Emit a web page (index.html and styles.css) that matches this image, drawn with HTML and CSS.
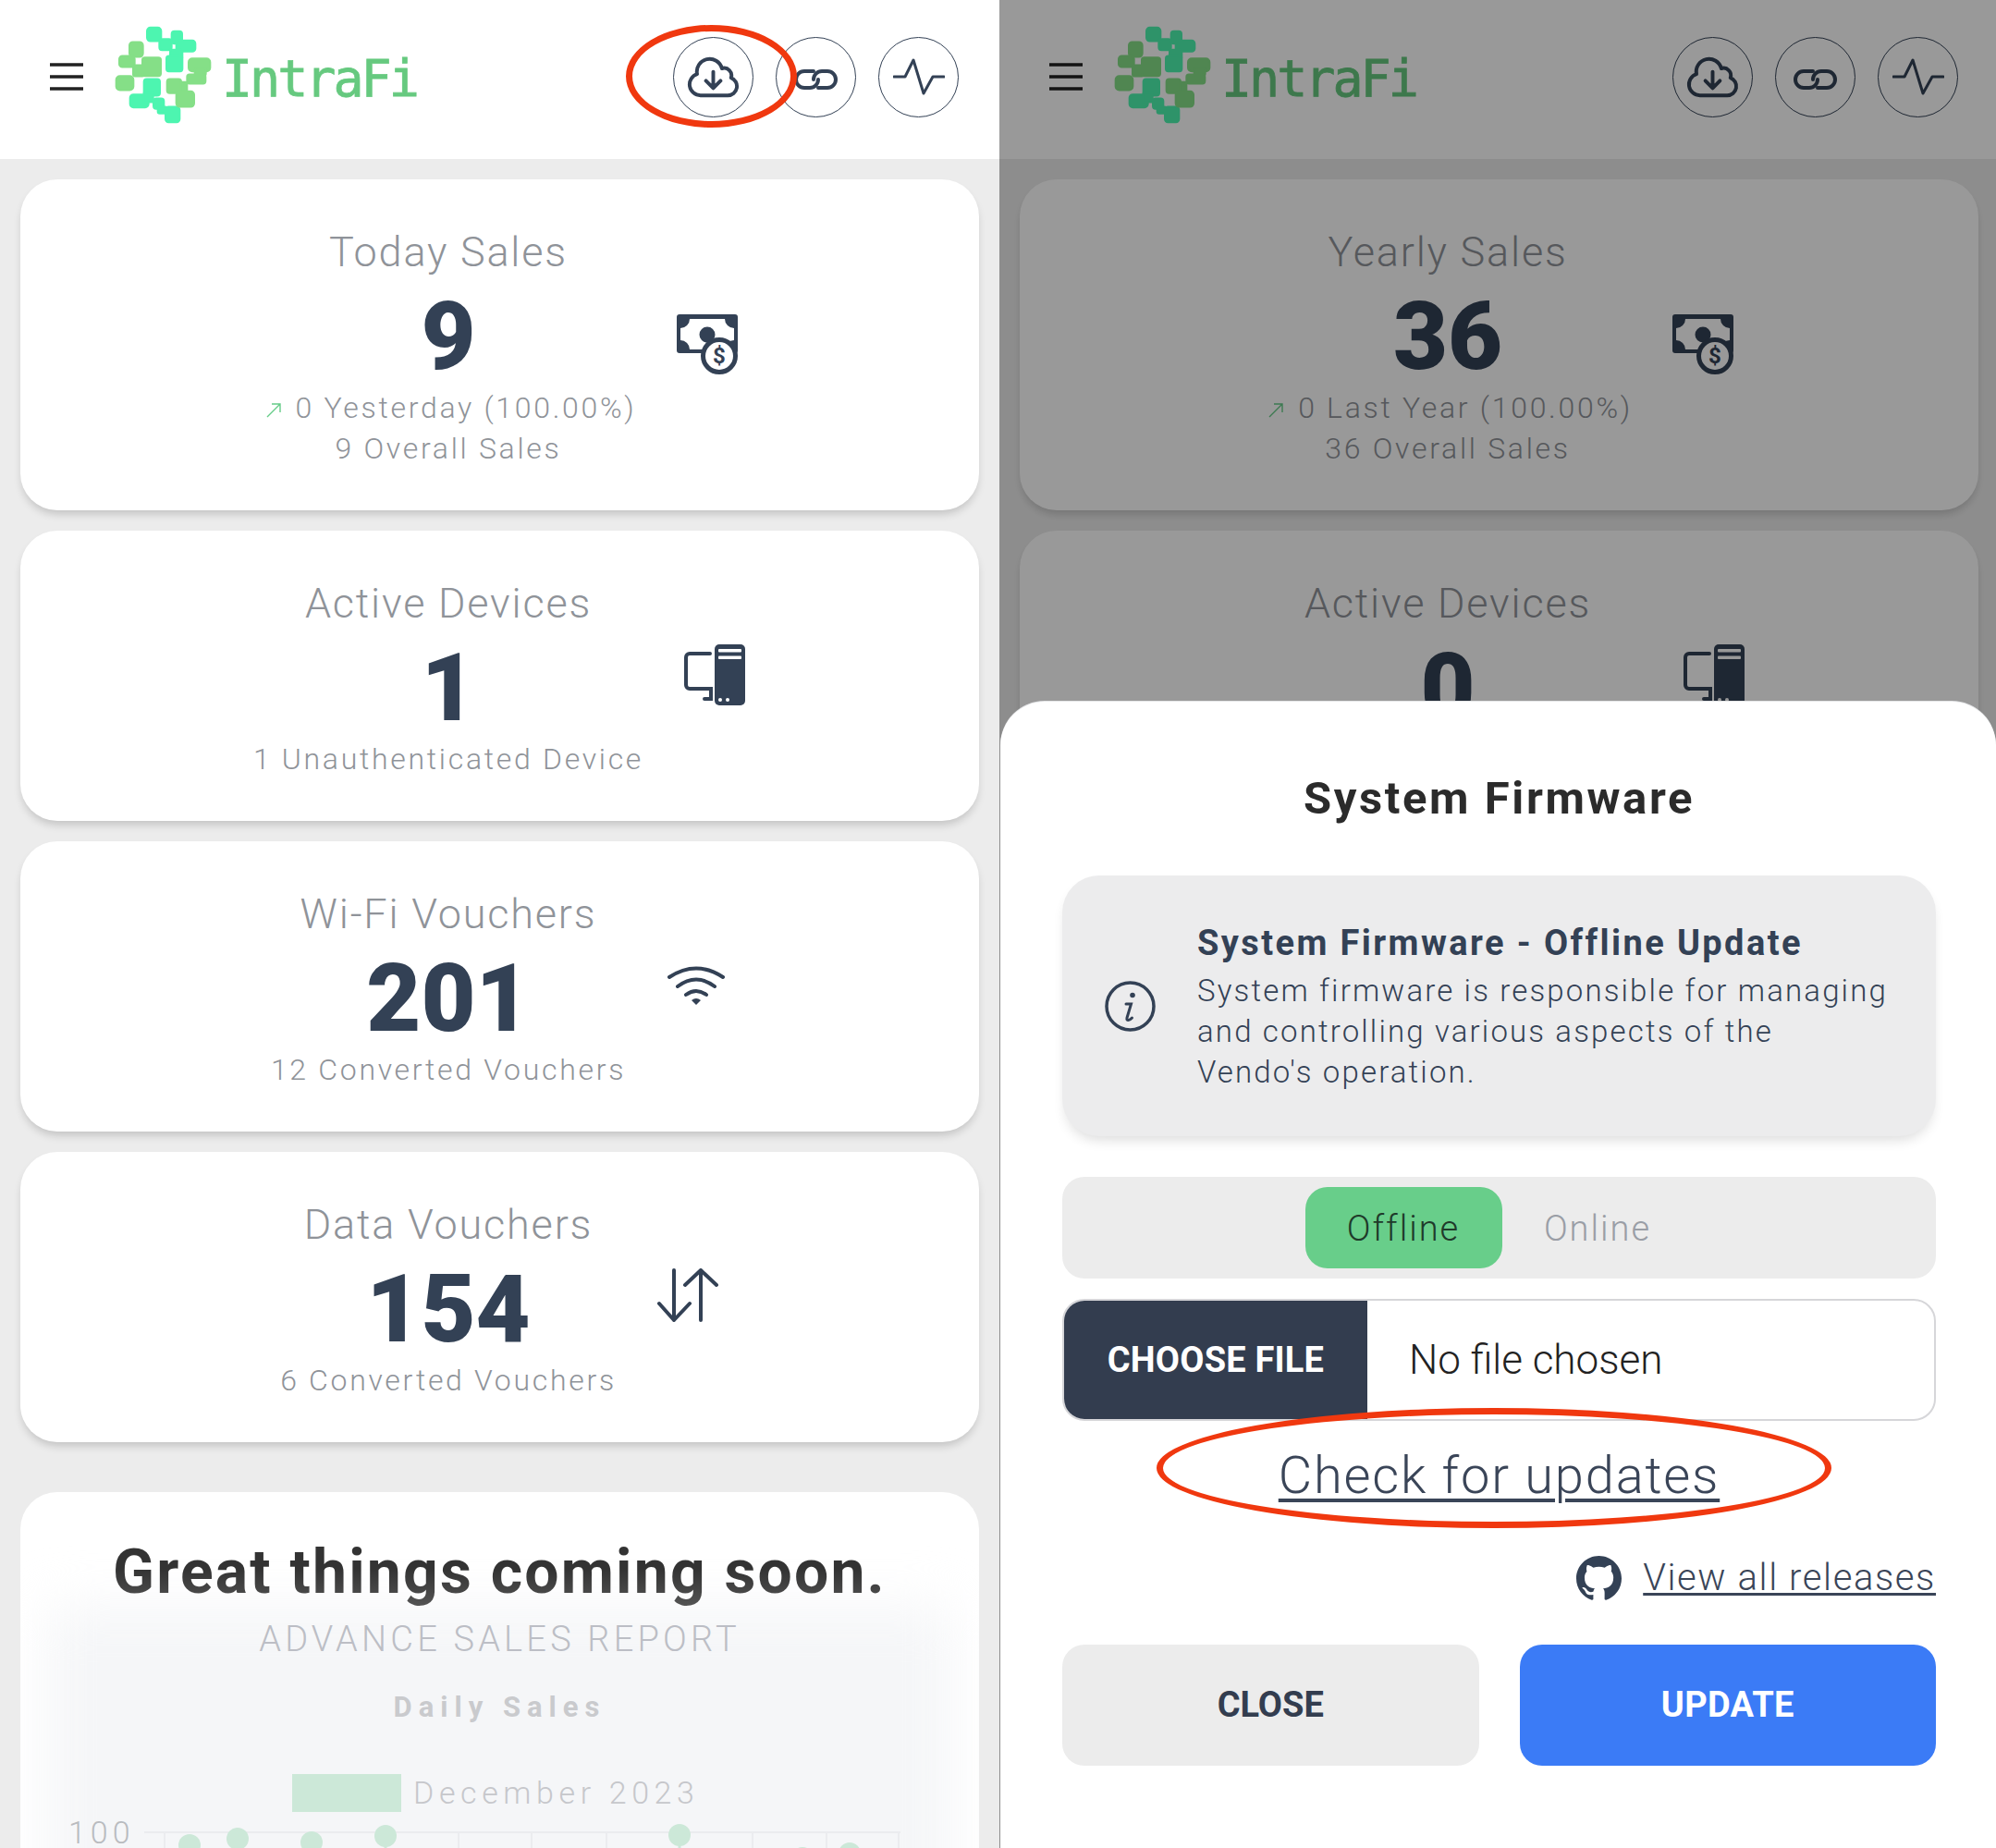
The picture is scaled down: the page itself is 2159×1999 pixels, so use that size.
FILE: index.html
```html
<!DOCTYPE html>
<html>
	<head>
		<meta charset="UTF-8">
		<title>IntraFi</title>
		<link rel="stylesheet" href="styles.css">
	</head>
	<body>
		<svg class="sprites" width="0" height="0">
			<symbol id="logo-mark" viewBox="70 50 315 320">
				<g fill="#4df5b0" stroke="#4df5b0" stroke-width="6" stroke-linejoin="round">
					<rect x="175" y="58" width="46" height="44" rx="11"/>
					<rect x="215" y="95" width="40" height="36" rx="9"/>
					<rect x="255" y="70" width="34" height="40" rx="9"/>
					<rect x="270" y="100" width="62" height="36" rx="10"/>
					<rect x="250" y="130" width="40" height="30" rx="6"/>
					<rect x="238" y="150" width="52" height="50" rx="8"/>
					<rect x="165" y="225" width="52" height="54" rx="9"/>
					<rect x="120" y="275" width="60" height="42" rx="11"/>
					<rect x="165" y="270" width="30" height="30"/>
					<rect x="196" y="288" width="34" height="34" rx="9"/>
					<rect x="210" y="315" width="30" height="22" rx="6"/>
					<rect x="235" y="315" width="46" height="50" rx="10"/>
				</g>
				<g fill="#85df87" stroke="#85df87" stroke-width="6" stroke-linejoin="round">
					<rect x="118" y="105" width="44" height="48" rx="11"/>
					<rect x="85" y="150" width="50" height="36" rx="10"/>
					<rect x="130" y="180" width="36" height="36" rx="6"/>
					<rect x="160" y="155" width="60" height="60" rx="8"/>
					<rect x="310" y="158" width="70" height="42" rx="12"/>
					<rect x="330" y="190" width="36" height="24" rx="6"/>
					<rect x="305" y="210" width="60" height="30" rx="8"/>
					<rect x="75" y="215" width="56" height="46" rx="12"/>
					<rect x="240" y="225" width="46" height="46" rx="9"/>
					<rect x="285" y="235" width="20" height="40" rx="5"/>
					<rect x="270" y="265" width="58" height="50" rx="11"/>
				</g>
			</symbol>
			<symbol id="icon-cloud" viewBox="0 0 24 24">
				<path fill="none" stroke="currentColor" stroke-width="1.5" stroke-linecap="round" stroke-linejoin="round" d="M12 9.75v6.75m0 0-3-3m3 3 3-3m-8.25 6a4.5 4.5 0 0 1-1.41-8.775 5.25 5.25 0 0 1 10.233-2.33 3 3 0 0 1 3.758 3.848A3.752 3.752 0 0 1 18 19.5H6.75Z"/>
			</symbol>
			<symbol id="icon-link" viewBox="0 0 47 22">
				<path fill="none" stroke="currentColor" stroke-width="4" stroke-linecap="round" d="M21 2H11a9 9 0 0 0 0 18h6a9 9 0 0 0 9-9"/>
				<path fill="none" stroke="currentColor" stroke-width="4" stroke-linecap="round" d="M26 20h10a9 9 0 0 0 0-18h-6a9 9 0 0 0-9 9"/>
			</symbol>
			<symbol id="icon-pulse" viewBox="0 0 56 40">
				<path fill="none" stroke="currentColor" stroke-width="3" stroke-linecap="round" stroke-linejoin="round" d="M1 20h12l9-18 11 36 10-18h12"/>
			</symbol>
			<symbol id="icon-money" viewBox="0 0 66 65">
				<rect width="66" height="42" rx="3" fill="currentColor"/>
				<path fill="#fff" d="M14 5H52A10 10 0 0 0 62 15V28A10 10 0 0 0 52 38H14A10 10 0 0 0 4 28V15A10 10 0 0 0 14 5Z"/>
				<circle cx="33" cy="22" r="8.5" fill="currentColor"/>
				<circle cx="46" cy="45" r="17.5" fill="#fff" stroke="currentColor" stroke-width="5"/>
				<text class="coin-text" x="46" y="53" text-anchor="middle">$</text>
			</symbol>
			<symbol id="icon-devices" viewBox="0 0 66 66">
				<rect x="33" width="33" height="66" rx="5" fill="currentColor"/>
				<rect x="37" y="5" width="25" height="3.5" rx="1" fill="#fff"/>
				<rect x="37" y="12.5" width="25" height="3.5" rx="1" fill="#fff"/>
				<circle cx="39" cy="60" r="2" fill="#fff"/>
				<circle cx="47" cy="60" r="2" fill="#fff"/>
				<path fill="none" stroke="currentColor" stroke-width="4" stroke-linecap="round" d="M28 10H6a4 4 0 0 0-4 4V44a4 4 0 0 0 4 4H29V59H22"/>
			</symbol>
			<symbol id="icon-wifi" viewBox="0 0 62 42">
				<g fill="none" stroke="currentColor" stroke-width="4" stroke-linecap="round">
					<path d="M2 12Q31-7 60 12"/>
					<path d="M11 22Q31 7 51 22"/>
					<path d="M20 31Q31 23 42 31"/>
				</g>
				<path fill="currentColor" d="M26 37Q31 33 36 37L31 42Z"/>
			</symbol>
			<symbol id="icon-arrows" viewBox="0 0 66 58">
				<path fill="none" stroke="currentColor" stroke-width="4" stroke-linecap="round" stroke-linejoin="round" d="M18 2V56M2 38 18 56 35 38M47 56V2M30 18 47 2 64 18"/>
			</symbol>
			<symbol id="icon-trend" viewBox="0 0 16 16">
				<path fill="none" stroke="#66cc88" stroke-width="1.4" d="M1 15 15 1M6 1h9v9"/>
			</symbol>
		</svg>

		<div class="page">
			<div class="screen">
				<header class="topbar">
					<svg class="burger" viewBox="0 0 36 30"><path d="M0 2h36M0 15h36M0 28h36"/></svg>
					<svg class="logo-mark"><use href="#logo-mark"/></svg>
					<span class="logo-text">IntraFi</span>
					<div class="topbar-btns">
						<span class="round-btn"><svg class="ic-cloud"><use href="#icon-cloud"/></svg></span>
						<span class="round-btn"><svg class="ic-link"><use href="#icon-link"/></svg></span>
						<span class="round-btn"><svg class="ic-pulse"><use href="#icon-pulse"/></svg></span>
					</div>
				</header>
				<main class="content">
					<section class="stat">
						<div class="stat-text">
							<div class="stat-title">Today Sales</div>
							<div class="stat-value">9</div>
							<div class="stat-desc"><svg class="ic-trend"><use href="#icon-trend"/></svg>0 Yesterday (100.00%)</div>
							<div class="stat-desc">9 Overall Sales</div>
						</div>
						<svg class="stat-icon ic-money"><use href="#icon-money"/></svg>
					</section>
					<section class="stat">
						<div class="stat-text">
							<div class="stat-title">Active Devices</div>
							<div class="stat-value">1</div>
							<div class="stat-desc">1 Unauthenticated Device</div>
						</div>
						<svg class="stat-icon ic-devices"><use href="#icon-devices"/></svg>
					</section>
					<section class="stat">
						<div class="stat-text">
							<div class="stat-title">Wi-Fi Vouchers</div>
							<div class="stat-value">201</div>
							<div class="stat-desc">12 Converted Vouchers</div>
						</div>
						<svg class="stat-icon ic-wifi"><use href="#icon-wifi"/></svg>
					</section>
					<section class="stat">
						<div class="stat-text">
							<div class="stat-title">Data Vouchers</div>
							<div class="stat-value">154</div>
							<div class="stat-desc">6 Converted Vouchers</div>
						</div>
						<svg class="stat-icon ic-arrows"><use href="#icon-arrows"/></svg>
					</section>
					<section class="soon">
						<h2 class="soon-title">Great things coming soon.</h2>
						<div class="soon-sub">ADVANCE SALES REPORT</div>
						<div class="chart-panel">
							<div class="chart-title">Daily Sales</div>
							<svg class="chart" viewBox="60 1866 961 133">
								<rect class="legend-box" x="316" y="1918" width="118" height="41"/>
								<text class="legend-text" x="447" y="1950">December 2023</text>
								<text class="axis-text" x="74" y="1993">100</text>
								<path class="grid" d="M156 1981H974M178 1981V1999M258 1981V1999M337 1981V1999M417 1981V1999M496 1981V1999M575 1981V1999M656 1981V1999M735 1981V1999M814 1981V1999M894 1981V1999M972 1981V1999"/>
								<path class="plot-line" d="M205 1999V1995M257 1999V1988M337 1999V1992M417 1999V1985M735 1999V1984"/>
								<g class="plot-dots">
									<circle cx="205" cy="1995" r="12"/>
									<circle cx="257" cy="1988" r="12"/>
									<circle cx="337" cy="1992" r="12"/>
									<circle cx="417" cy="1985" r="12"/>
									<circle cx="735" cy="1984" r="12"/>
									<circle cx="868" cy="2009" r="12"/>
									<circle cx="919" cy="2004" r="12"/>
								</g>
							</svg>
						</div>
					</section>
				</main>
				<div class="mark mark-cloud"></div>
			</div>

			<div class="screen">
				<header class="topbar">
					<svg class="burger" viewBox="0 0 36 30"><path d="M0 2h36M0 15h36M0 28h36"/></svg>
					<svg class="logo-mark"><use href="#logo-mark"/></svg>
					<span class="logo-text">IntraFi</span>
					<div class="topbar-btns">
						<span class="round-btn"><svg class="ic-cloud"><use href="#icon-cloud"/></svg></span>
						<span class="round-btn"><svg class="ic-link"><use href="#icon-link"/></svg></span>
						<span class="round-btn"><svg class="ic-pulse"><use href="#icon-pulse"/></svg></span>
					</div>
				</header>
				<main class="content">
					<section class="stat">
						<div class="stat-text">
							<div class="stat-title">Yearly Sales</div>
							<div class="stat-value">36</div>
							<div class="stat-desc"><svg class="ic-trend"><use href="#icon-trend"/></svg>0 Last Year (100.00%)</div>
							<div class="stat-desc">36 Overall Sales</div>
						</div>
						<svg class="stat-icon ic-money ic-money-year"><use href="#icon-money"/></svg>
					</section>
					<section class="stat">
						<div class="stat-text">
							<div class="stat-title">Active Devices</div>
							<div class="stat-value">0</div>
						</div>
						<svg class="stat-icon ic-devices"><use href="#icon-devices"/></svg>
					</section>
				</main>
				<div class="dim"></div>
				<div class="sheet">
					<h3 class="sheet-title">System Firmware</h3>
					<div class="info">
						<svg class="info-icon" viewBox="0 0 55 55">
							<circle cx="27.5" cy="27.5" r="25.5" fill="none" stroke="currentColor" stroke-width="3.5"/>
							<circle cx="30" cy="15.5" r="2.8" fill="currentColor"/>
							<path fill="none" stroke="currentColor" stroke-width="3" stroke-linecap="round" d="M23 25h5.5l-4.5 15q-.6 2.5 1.5 2.5 1.7 0 4-2.5"/>
						</svg>
						<div>
							<div class="info-title">System Firmware - Offline Update</div>
							<p class="info-body">System firmware is responsible for managing and controlling various aspects of the Vendo's operation.</p>
						</div>
					</div>
					<div class="tabs">
						<span class="tab tab-on">Offline</span>
						<span class="tab">Online</span>
					</div>
					<div class="file-input">
						<span class="file-btn">CHOOSE FILE</span>
						<span class="file-name">No file chosen</span>
					</div>
					<a class="check-link">Check for updates</a>
					<div class="releases">
						<svg class="gh-icon" viewBox="0 0 16 16"><path fill="currentColor" d="M8 0C3.58 0 0 3.58 0 8c0 3.54 2.29 6.53 5.47 7.59.4.07.55-.17.55-.38 0-.19-.01-.82-.01-1.49-2.01.37-2.53-.49-2.69-.94-.09-.23-.48-.94-.82-1.13-.28-.15-.68-.52-.01-.53.63-.01 1.08.58 1.23.82.72 1.21 1.87.87 2.33.66.07-.52.28-.87.51-1.07-1.78-.2-3.64-.89-3.64-3.95 0-.87.31-1.59.82-2.15-.08-.2-.36-1.02.08-2.12 0 0 .67-.21 2.2.82.64-.18 1.32-.27 2-.27.68 0 1.36.09 2 .27 1.53-1.04 2.2-.82 2.2-.82.44 1.1.16 1.92.08 2.12.51.56.82 1.27.82 2.15 0 3.07-1.87 3.75-3.65 3.95.29.25.54.73.54 1.48 0 1.07-.01 1.93-.01 2.2 0 .21.15.46.55.38A8.013 8.013 0 0016 8c0-4.42-3.58-8-8-8z"/></svg>
						<a class="releases-link">View all releases</a>
					</div>
					<div class="actions">
						<span class="action action-close">CLOSE</span>
						<span class="action action-update">UPDATE</span>
					</div>
				</div>
				<div class="mark mark-check"></div>
			</div>
		</div>
	</body>
</html>
```

FILE: styles.css
```css
*{
	margin: 0;
	padding: 0;
	box-sizing: border-box;
}
html,body{
	height: 1999px;
	overflow: hidden;
}
body{
	font-family: Roboto, "Noto Sans", sans-serif;
	background: #fff;
}
.sprites{
	position: absolute;
}
.page{
	display: flex;
	height: 1999px;
	overflow: hidden;
}
.screen{
	position: relative;
	flex: none;
	width: 1081px;
	height: 1999px;
	overflow: hidden;
	background: #ececec;
}

/* top bar */
.topbar{
	display: flex;
	align-items: center;
	height: 172px;
	padding: 0 44px 6px 54px;
	background: #fff;
}
.burger{
	width: 36px;
	height: 30px;
	margin-right: 34px;
}
.burger path{
	fill: none;
	stroke: #222;
	stroke-width: 3.5;
}
.logo-mark{
	width: 105px;
	height: 107px;
	margin: -6px 11px 0 0;
}
.logo-text{
	margin-top: 4px;
	font-family: "DejaVu Sans Mono", monospace;
	font-size: 55px;
	letter-spacing: -3px;
	color: #66c97f;
	-webkit-text-stroke: .8px #66c97f;
}
.topbar-btns{
	display: flex;
	gap: 24px;
	margin-left: auto;
}
.round-btn{
	display: flex;
	align-items: center;
	justify-content: center;
	width: 87px;
	height: 87px;
	border: 1.5px solid #334155;
	border-radius: 50%;
	color: #334155;
}
.ic-cloud{
	width: 63px;
	height: 63px;
}
.ic-link{
	width: 47px;
	height: 22px;
	margin-top: 5px;
}
.ic-pulse{
	width: 56px;
	height: 40px;
}

/* stat cards */
.content{
	display: flex;
	flex-direction: column;
	gap: 22px;
	padding: 22px 22px 0;
}
.stat{
	display: flex;
	align-items: flex-start;
	padding: 51px 0 45px 243px;
	background: #fff;
	border-radius: 40px;
	box-shadow: 0 6px 10px -2px rgba(0,0,0,.18);
}
.stat-text{
	width: 440px;
	flex: none;
	text-align: center;
}
.stat-title{
	font-size: 45px;
	font-weight: 300;
	line-height: 56px;
	letter-spacing: 1.8px;
	color: #8f9399;
}
.stat-value{
	margin-top: 14px;
	font-size: 102px;
	font-weight: 900;
	line-height: 99px;
	color: #334155;
}
.stat-desc{
	font-size: 32px;
	font-weight: 300;
	line-height: 44px;
	letter-spacing: 2.7px;
	color: #8f9399;
}
.stat-value + .stat-desc{
	margin-top: 5px;
}
.ic-trend{
	width: 16px;
	height: 16px;
	margin: 0 16px 0 6px;
}
.stat-icon{
	flex: none;
	color: #334155;
}
.ic-money{
	width: 66px;
	height: 65px;
	margin: 95px 0 0 27px;
}
.ic-money-year{
	margin-left: 23px;
}
.ic-devices{
	width: 66px;
	height: 66px;
	margin: 72px 0 0 35px;
}
.ic-wifi{
	width: 62px;
	height: 42px;
	margin: 84px 0 0 17px;
}
.ic-arrows{
	width: 66px;
	height: 58px;
	margin: 75px 0 0 6px;
}
.coin-text{
	font-family: Roboto, sans-serif;
	font-size: 24px;
	font-weight: 700;
	fill: currentColor;
}

/* coming soon card */
.soon{
	position: relative;
	height: 500px;
	margin-top: 32px;
	padding-top: 49px;
	overflow: hidden;
	background: #fff;
	border-radius: 40px 40px 0 0;
	text-align: center;
}
/* soft grey haze behind the faded chart */
.soon::before{
	content: "";
	position: absolute;
	inset: 125px 30px -60px;
	background: #f5f6f8;
	filter: blur(28px);
}
.soon-title{
	position: relative;
	font-size: 66px;
	font-weight: 700;
	line-height: 76px;
	letter-spacing: 2.2px;
	background: linear-gradient(#333 45%, #555 100%);
	-webkit-background-clip: text;
	background-clip: text;
	color: transparent;
}
.soon-sub{
	position: relative;
	margin-top: 10px;
	font-size: 38px;
	font-weight: 300;
	line-height: 48px;
	letter-spacing: 4.2px;
	color: #bcbec5;
}
.chart-panel{
	position: relative;
	margin: 14px 38px 0;
	padding-top: 16px;
}
.chart-title{
	font-size: 31px;
	font-weight: 700;
	line-height: 40px;
	letter-spacing: 7px;
	color: #c9cacd;
}
.chart{
	display: block;
	width: 961px;
	height: 133px;
}
.legend-box{
	fill: #cce8d8;
}
.legend-text{
	font-size: 34px;
	font-weight: 300;
	letter-spacing: 5.6px;
	fill: #c6c7cb;
}
.axis-text{
	font-size: 34px;
	font-weight: 300;
	letter-spacing: 5px;
	fill: #b9bbbf;
}
.grid{
	fill: none;
	stroke: #ebecef;
	stroke-width: 2;
}
.plot-line{
	fill: none;
	stroke: #cce8d8;
	stroke-width: 3;
}
.plot-dots{
	fill: #cce8d8;
}

/* modal sheet */
.dim{
	position: absolute;
	inset: 0;
	background: rgba(0,0,0,.4);
}
.sheet{
	position: absolute;
	left: 1px;
	right: 3px;
	top: 759px;
	bottom: 0;
	padding: 75px 65px 0 67px;
	background: #fff;
	border-radius: 48px 48px 0 0;
	box-shadow: 0 -1px 0 #e4e5e7;
}
.sheet-title{
	font-size: 49px;
	font-weight: 700;
	line-height: 60px;
	letter-spacing: 2.6px;
	text-align: center;
	color: #2b2b2b;
}
.info{
	display: flex;
	align-items: center;
	gap: 45px;
	height: 282px;
	margin-top: 53px;
	padding: 0 46px 0 46px;
	background: #ececed;
	border-radius: 40px;
	box-shadow: 0 8px 14px -4px rgba(0,0,0,.14);
	color: #334155;
}
.info-icon{
	width: 55px;
	height: 55px;
	flex: none;
}
.info-title{
	font-size: 38px;
	font-weight: 700;
	line-height: 50px;
	letter-spacing: 2.4px;
}
.info-body{
	margin-top: 5px;
	font-size: 33px;
	font-weight: 300;
	line-height: 44px;
	letter-spacing: 2.15px;
}
.tabs{
	display: flex;
	justify-content: center;
	height: 110px;
	margin-top: 44px;
	padding-top: 11px;
	background: #ececec;
	border-radius: 24px;
}
.tab{
	width: 207px;
	height: 88px;
	font-size: 38px;
	font-weight: 300;
	line-height: 90px;
	letter-spacing: 2px;
	text-align: center;
	color: #9a9ea6;
	border-radius: 24px;
}
.tab-on{
	width: 213px;
	background: #68ce8a;
	color: #1f3a2a;
}
.file-input{
	display: flex;
	align-items: stretch;
	height: 132px;
	margin-top: 22px;
	overflow: hidden;
	background: #fff;
	border: 2px solid #d6d6d9;
	border-radius: 24px;
}
.file-btn{
	display: flex;
	align-items: center;
	justify-content: center;
	width: 328px;
	background: #333d4f;
	color: #fff;
	font-size: 38px;
	font-weight: 700;
	letter-spacing: .2px;
}
.file-name{
	display: flex;
	align-items: center;
	padding-left: 45px;
	font-size: 44px;
	font-weight: 300;
	color: #222;
}
.check-link{
	display: block;
	margin-top: 26px;
	font-size: 56px;
	font-weight: 300;
	line-height: 66px;
	letter-spacing: 1.8px;
	text-align: center;
	text-decoration: underline;
	text-decoration-thickness: 4px;
	text-underline-offset: 6px;
	color: #3a4558;
}
.releases{
	display: flex;
	align-items: center;
	justify-content: flex-end;
	gap: 23px;
	height: 50px;
	margin-top: 53px;
}
.gh-icon{
	width: 49px;
	height: 49px;
	color: #334155;
}
.releases-link{
	font-size: 40px;
	font-weight: 300;
	line-height: 50px;
	letter-spacing: 1.6px;
	text-decoration: underline;
	text-decoration-thickness: 3px;
	text-underline-offset: 3px;
	color: #3a4558;
}
.actions{
	display: flex;
	gap: 44px;
	margin-top: 47px;
}
.action{
	flex: 1;
	height: 131px;
	font-size: 38px;
	font-weight: 700;
	line-height: 131px;
	text-align: center;
	border-radius: 24px;
}
.action-close{
	background: #ececec;
	color: #333d4f;
}
.action-update{
	background: #3b7bf6;
	color: #fff;
	letter-spacing: .3px;
}

/* hand drawn red marks on the screenshot */
.mark{
	position: absolute;
	border: 7px solid #f0380f;
	border-radius: 50%;
}
.mark-cloud{
	left: 677px;
	top: 27px;
	width: 185px;
	height: 111px;
}
.mark-check{
	left: 170px;
	top: 1523px;
	width: 730px;
	height: 130px;
}
```
